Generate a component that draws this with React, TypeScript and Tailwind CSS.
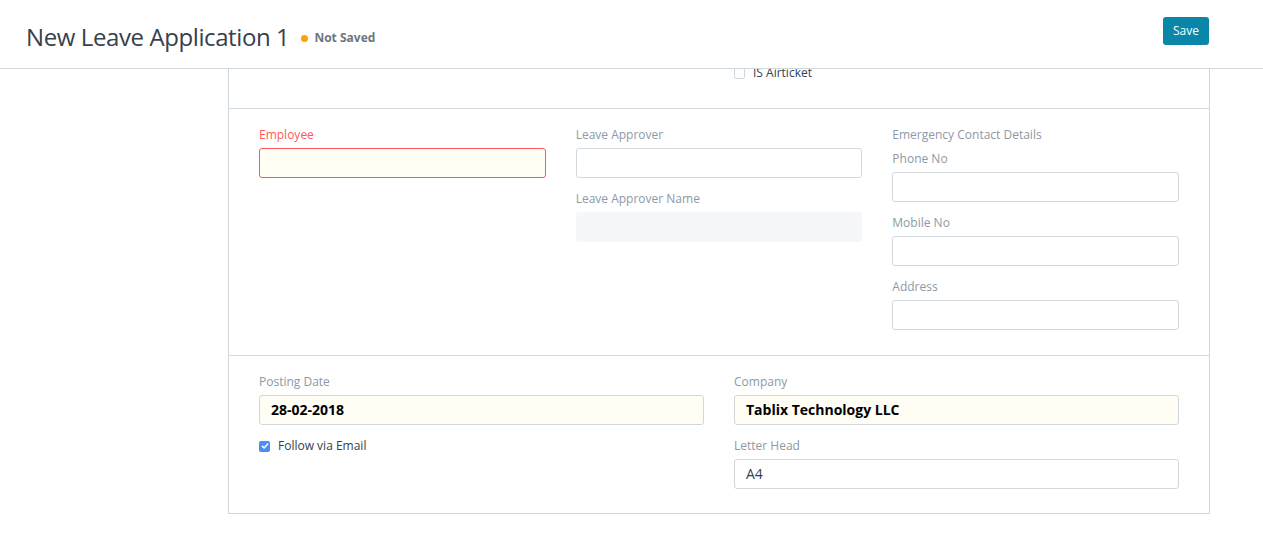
import React from "react";

const font = { fontFamily: '"Open Sans", "Noto Sans", sans-serif' };

const Label: React.FC<{ text: string; error?: boolean }> = ({ text, error }) => (
  <div className={`h-[18px] text-xs leading-[18px] ${error ? "text-[#ff5858]" : "text-[#8d99a6]"}`}>{text}</div>
);

interface FieldProps {
  label: string;
  value?: string;
  bold?: boolean;
  mandatory?: boolean;
  error?: boolean;
  readOnly?: boolean;
}

const Field: React.FC<FieldProps> = ({ label, value, bold, mandatory, error, readOnly }) => {
  let box = "border border-[#d1d8dd] bg-white";
  if (mandatory) box = "border border-[#d1d8dd] bg-[#fffdf4]";
  if (error) box = "border border-[#ff5858] bg-[#fffdf4]";
  if (readOnly) box = "border border-[#f5f7fa] bg-[#f5f7fa]";

  return (
    <div className="mb-3">
      <Label text={label} error={error} />
      <div
        className={`mt-1 flex h-[30px] items-center rounded-[3px] px-[11px] text-sm ${box} ${
          bold ? "font-bold text-black" : "text-[#36414c]"
        }`}
      >
        {value}
      </div>
    </div>
  );
};

const Check: React.FC<{ label: string; checked?: boolean }> = ({ label, checked }) => (
  <div className="flex h-[18px] items-center gap-2 text-xs text-[#36414c]">
    {checked ? (
      <span className="flex h-[11px] w-[11px] items-center justify-center rounded-[2px] bg-[#4b8df8]">
        <svg width="8" height="8" viewBox="0 0 8 8" fill="none">
          <path d="M1.3 4.2 3.1 5.9 6.7 2.1" stroke="white" strokeWidth="1.5" strokeLinecap="round" strokeLinejoin="round" />
        </svg>
      </span>
    ) : (
      <span className="h-[11px] w-[11px] rounded-[2px] border border-[#d1d8dd] bg-white" />
    )}
    <span>{label}</span>
  </div>
);

export default function App() {
  return (
    <div className="min-h-[541px] bg-white" style={font}>
      {/* page head */}
      <div className="relative z-10 flex h-[69px] items-center justify-between border-b border-[#d1d8dd] bg-white pl-[26px] pr-[54px]">
        <div className="flex items-center gap-3 pt-[5px]">
          <h1 className="text-[24px] font-medium leading-none tracking-[-0.4px] text-[#36414c]">New Leave Application 1</h1>
          <div className="flex items-center gap-[6px] pt-[3px] text-xs font-bold text-[#6c7680]">
            <span className="h-[7px] w-[7px] rounded-full bg-[#ffa00a]" />
            Not Saved
          </div>
        </div>
        <button className="mb-[7px] h-[28px] rounded-[3px] bg-[#0a86a8] px-[10px] text-xs text-white">Save</button>
      </div>

      {/* form card */}
      <div className="ml-[228px] mt-[-1px] w-[982px] border-x border-b border-[#d1d8dd]">
        <div className="grid h-[40px] grid-cols-2 gap-[30px] px-[30px]">
          <div />
          <div className="-mt-[4px]">
            <Check label="IS Airticket" />
          </div>
        </div>

        <div className="grid grid-cols-3 gap-[30px] border-t border-[#d1d8dd] px-[30px] pb-[13px] pt-[17px]">
          <div>
            <Field label="Employee" mandatory error />
          </div>
          <div>
            <Field label="Leave Approver" />
            <Field label="Leave Approver Name" readOnly />
          </div>
          <div>
            <div className="mb-[6px]">
              <Label text="Emergency Contact Details" />
            </div>
            <Field label="Phone No" />
            <Field label="Mobile No" />
            <Field label="Address" />
          </div>
        </div>

        <div className="grid grid-cols-2 gap-[30px] border-t border-[#d1d8dd] px-[30px] pb-[12px] pt-[17px]">
          <div>
            <Field label="Posting Date" value="28-02-2018" bold mandatory />
            <Check label="Follow via Email" checked />
          </div>
          <div>
            <Field label="Company" value="Tablix Technology LLC" bold mandatory />
            <Field label="Letter Head" value="A4" />
          </div>
        </div>
      </div>
    </div>
  );
}
